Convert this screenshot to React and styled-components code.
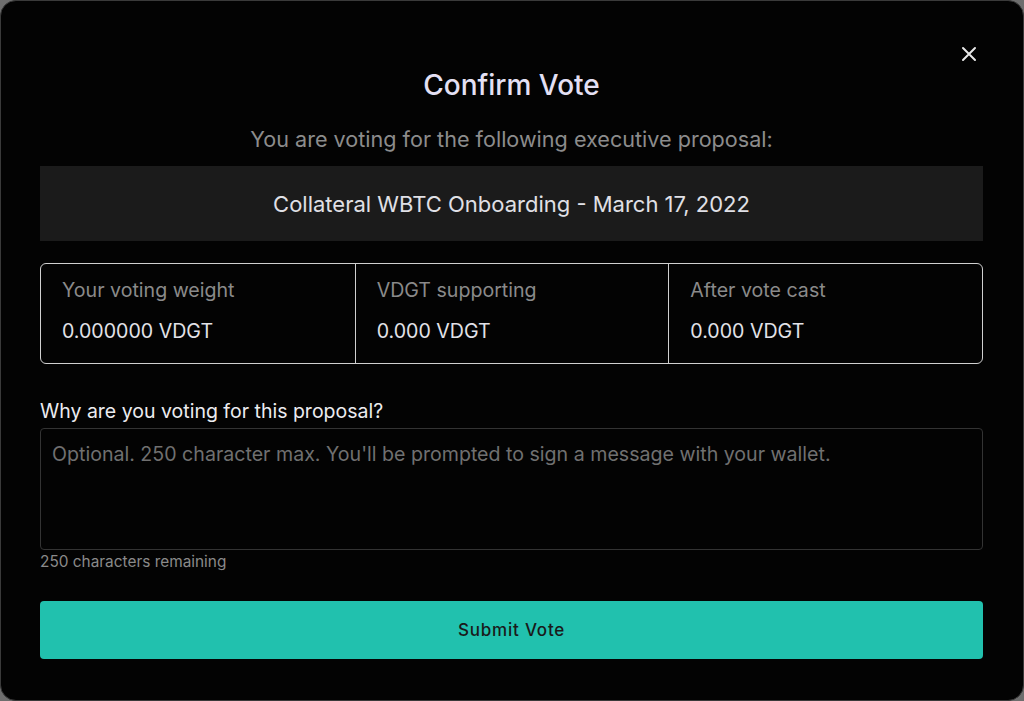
import React from "react";
import styled, { createGlobalStyle } from "styled-components";

const GlobalStyle = createGlobalStyle`
  html, body {
    margin: 0;
    padding: 0;
    background: #6e6e6e;
  }
  * {
    box-sizing: border-box;
  }
`;

const stats = [
  { label: "Your voting weight", value: "0.000000 VDGT" },
  { label: "VDGT supporting", value: "0.000 VDGT" },
  { label: "After vote cast", value: "0.000 VDGT" },
];

const App = () => {
  return (
    <>
      <GlobalStyle />
      <Modal>
        <CloseButton aria-label="Close">
          <svg width="16" height="16" viewBox="0 0 16 16">
            <path
              d="M2 2 L14 14 M14 2 L2 14"
              stroke="#e8e8e8"
              strokeWidth="2"
              strokeLinecap="round"
            />
          </svg>
        </CloseButton>
        <Title>Confirm Vote</Title>
        <Subtitle>You are voting for the following executive proposal:</Subtitle>
        <ProposalBox>Collateral WBTC Onboarding - March 17, 2022</ProposalBox>
        <StatsGrid>
          {stats.map((s) => (
            <StatCell key={s.label}>
              <StatLabel>{s.label}</StatLabel>
              <StatValue>{s.value}</StatValue>
            </StatCell>
          ))}
        </StatsGrid>
        <FieldLabel>Why are you voting for this proposal?</FieldLabel>
        <TextArea placeholder="Optional. 250 character max. You'll be prompted to sign a message with your wallet." />
        <Remaining>250 characters remaining</Remaining>
        <SubmitButton>Submit Vote</SubmitButton>
      </Modal>
    </>
  );
};

export default App;

/** styled component */
const Modal = styled.div`
  position: relative;
  width: 1024px;
  height: 701px;
  background: #030303;
  border-radius: 16px;
  border: 1px solid #3a3a3a;
  padding: 0 40px 0 39px;
  display: flex;
  flex-direction: column;
  font-family: Inter, "Liberation Sans", sans-serif;
`;

const CloseButton = styled.button`
  position: absolute;
  top: 45px;
  right: 46px;
  width: 16px;
  height: 16px;
  padding: 0;
  border: none;
  background: transparent;
  cursor: pointer;
  display: flex;
`;

const Title = styled.h1`
  margin: 67px 0 0;
  font-size: 28px;
  font-weight: 500;
  line-height: 34px;
  color: #e4e0f4;
  text-align: center;
`;

const Subtitle = styled.p`
  margin: 24px 0 0;
  font-size: 21.6px;
  line-height: 26px;
  color: #8c8c8c;
  text-align: center;
`;

const ProposalBox = styled.div`
  margin-top: 14px;
  height: 75px;
  flex-shrink: 0;
  background: #1b1b1b;
  display: flex;
  align-items: center;
  justify-content: center;
  font-size: 22px;
  color: #e0e0e6;
`;

const StatsGrid = styled.div`
  margin-top: 22px;
  height: 101px;
  flex-shrink: 0;
  border: 1px solid #d0d0d0;
  border-radius: 6px;
  display: grid;
  grid-template-columns: repeat(3, 1fr);
`;

const StatCell = styled.div`
  padding: 14px 21px;
  display: flex;
  flex-direction: column;
  gap: 17px;
  & + & {
    border-left: 1px solid #d0d0d0;
  }
`;

const StatLabel = styled.span`
  font-size: 19.6px;
  line-height: 24px;
  color: #8a8a8a;
`;

const StatValue = styled.span`
  font-size: 19.6px;
  line-height: 24px;
  color: #e2e2e8;
`;

const FieldLabel = styled.label`
  margin-top: 35px;
  font-size: 19.5px;
  line-height: 24px;
  color: #ececf0;
`;

const TextArea = styled.textarea`
  margin-top: 5px;
  height: 122px;
  flex-shrink: 0;
  resize: none;
  background: #030303;
  border: 1px solid #333;
  border-radius: 4px;
  padding: 13px 11px;
  font-family: inherit;
  font-size: 19.6px;
  line-height: 24px;
  color: #e0e0e0;
  outline: none;
  &::placeholder {
    color: #707070;
  }
`;

const Remaining = styled.span`
  margin-top: 3px;
  font-size: 15.4px;
  line-height: 18px;
  color: #8a8a8a;
`;

const SubmitButton = styled.button`
  margin-top: 30px;
  height: 58px;
  flex-shrink: 0;
  border: none;
  border-radius: 4px;
  background: #21c1ae;
  color: #1a1a1a;
  font-family: inherit;
  font-size: 17px;
  font-weight: 500;
  letter-spacing: 0.8px;
  cursor: pointer;
`;
